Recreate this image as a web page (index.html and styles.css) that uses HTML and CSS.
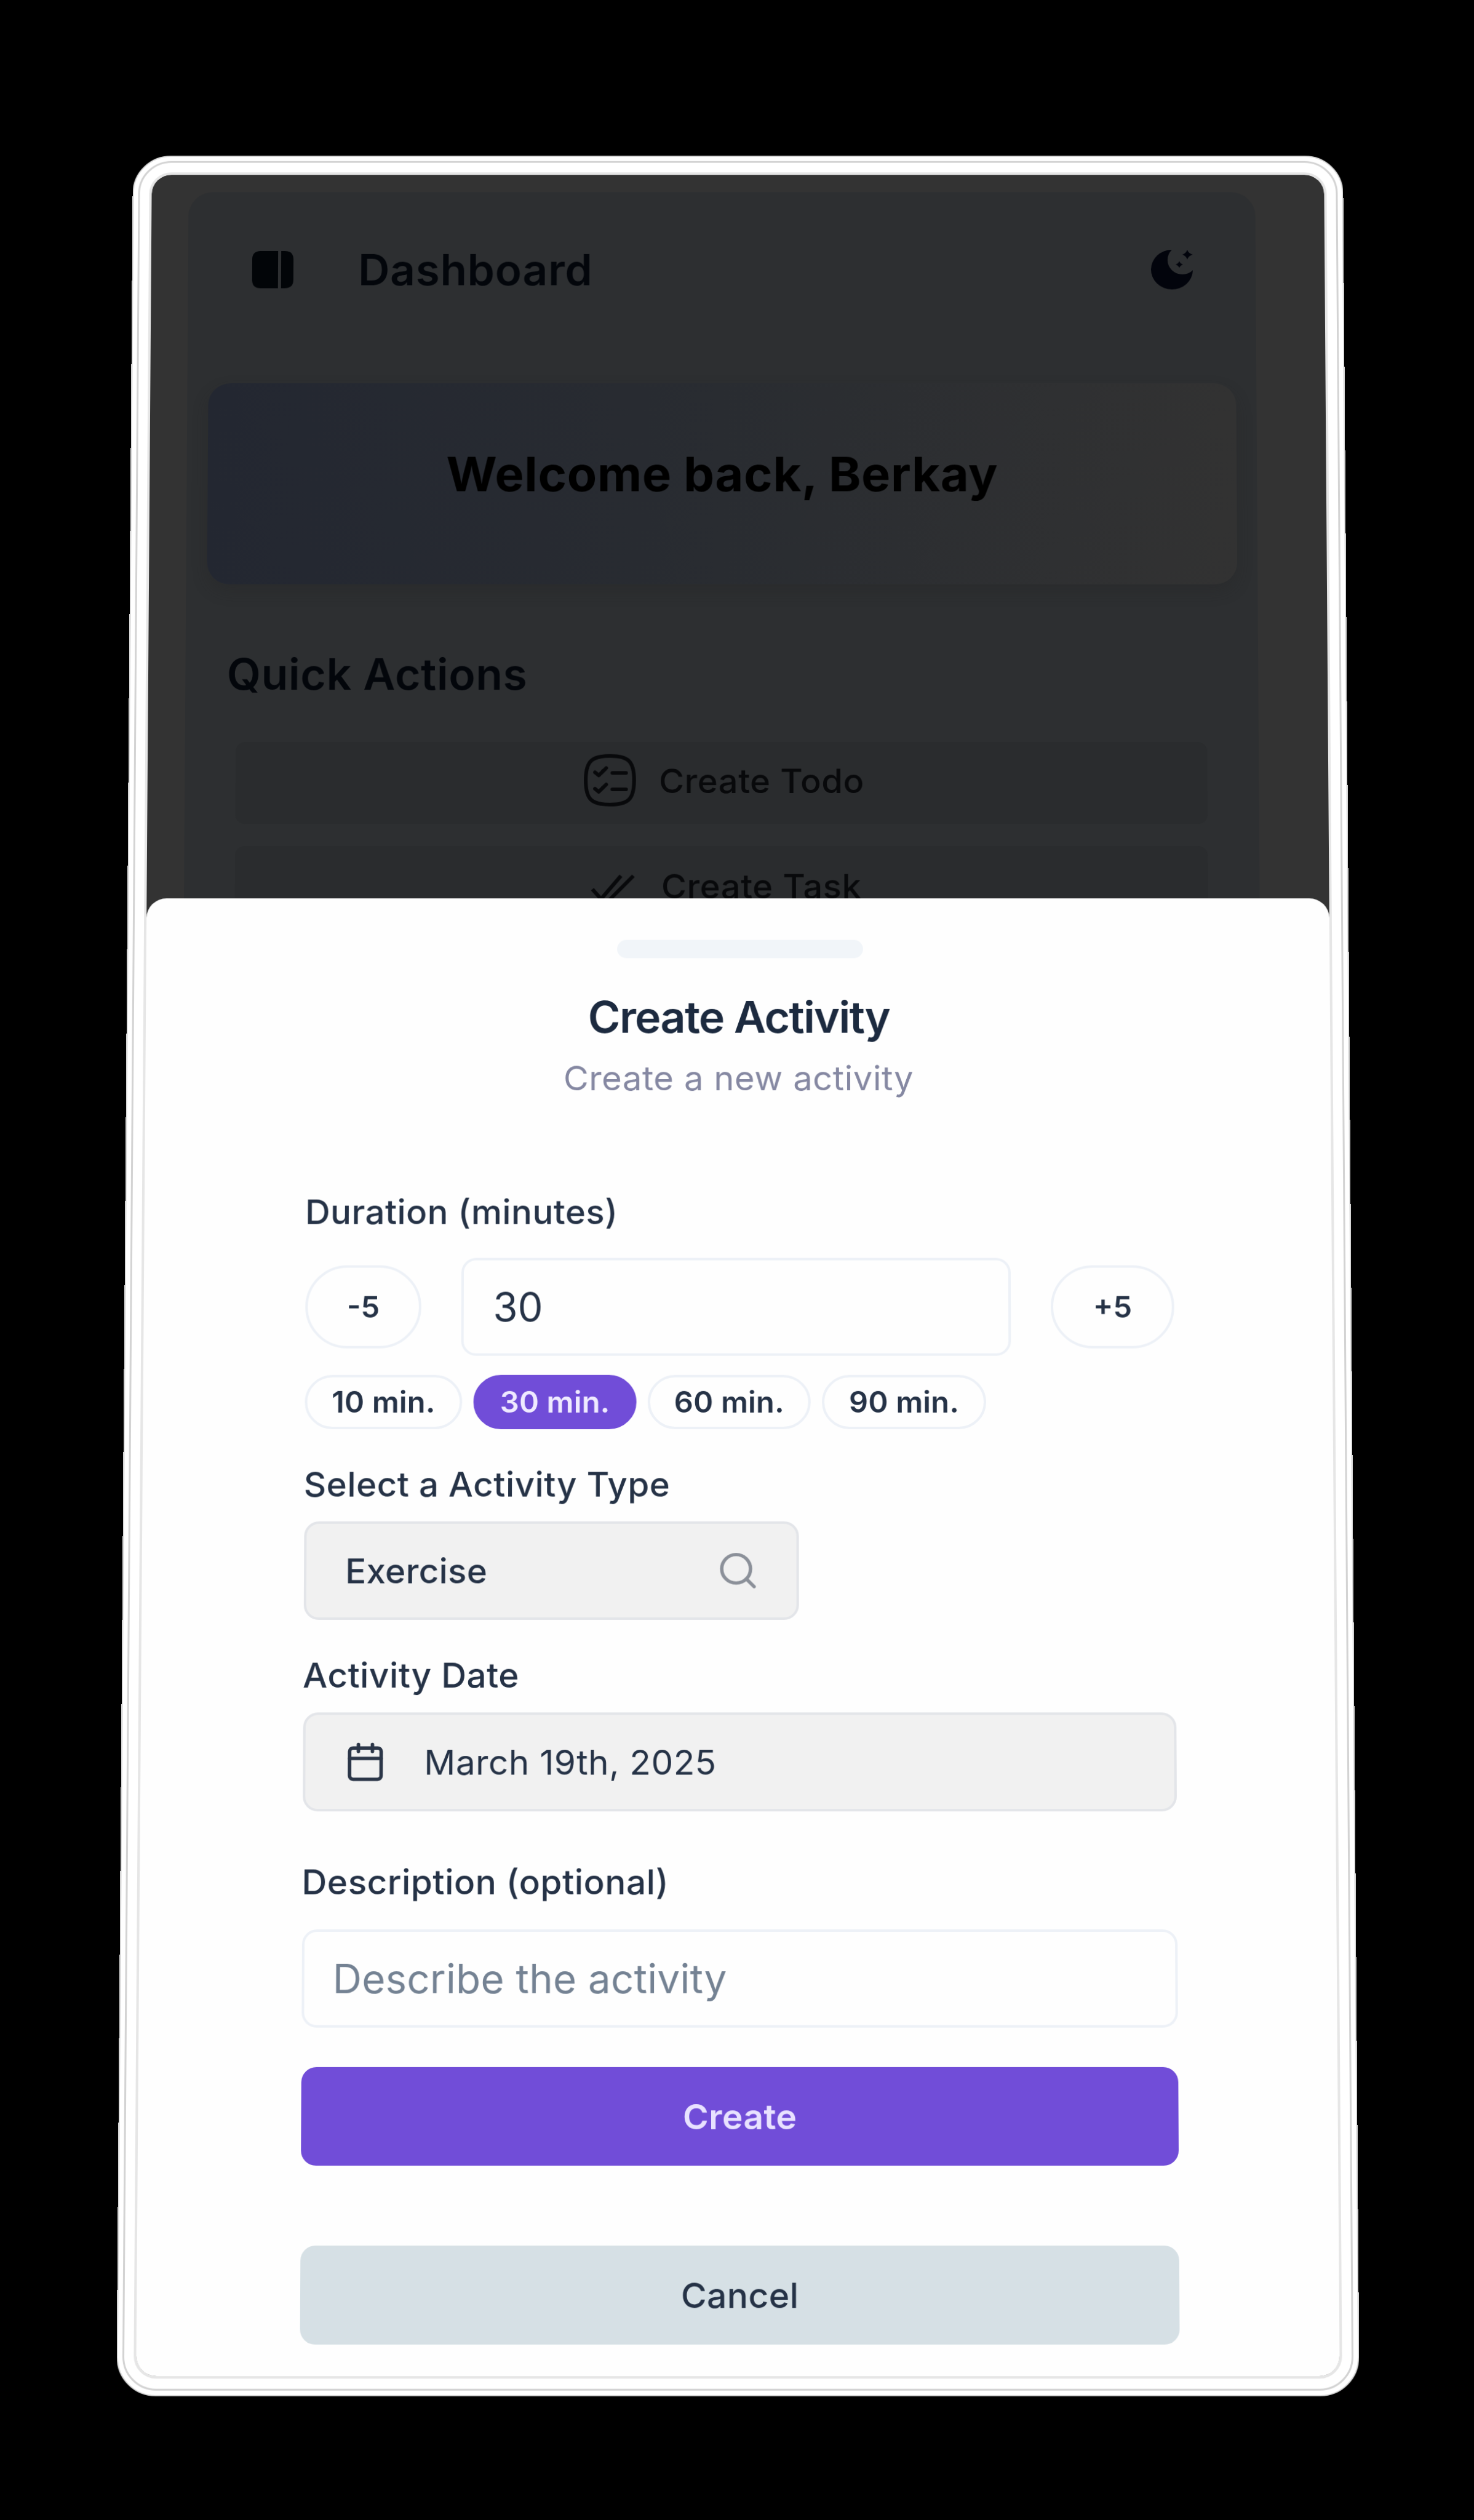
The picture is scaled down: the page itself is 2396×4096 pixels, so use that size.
FILE: index.html
```html
<!DOCTYPE html>
<html lang="en">
<head>
<meta charset="utf-8">
<title>Create Activity</title>
<link rel="stylesheet" href="styles.css">
</head>
<body>
<main class="device">
  <div class="bezel">
    <div class="screen">
      <section class="dashboard">
        <header class="topbar">
          <svg class="icon-panel" viewBox="0 0 67 62"><path d="M14 0H42V62H14Q0 62 0 48V14Q0 0 14 0ZM47 0H53Q67 0 67 14V48Q67 62 53 62H47Z"/></svg>
          <h1 class="topbar-title">Dashboard</h1>
          <svg class="icon-moon" viewBox="0 0 67 66"><path d="M33 0A34 33 0 1 0 67 34 22.500 22.500 0 1 1 33 0Z"/><path d="M58 0Q60 6 67 8 60 10 58 16 56 10 50 8 56 6 58 0ZM45 19Q46.500 23 51 24.500 46.500 26 45 30 43.500 26 39 24.500 43.500 23 45 19Z"/></svg>
        </header>
        <div class="banner">Welcome back, Berkay</div>
        <h2 class="quick-title">Quick Actions</h2>
        <div class="quick-list">
          <div class="quick-btn q-todo">
            <svg class="icon-todo" viewBox="0 0 84 86"><path d="M42 3C72 3 81 12 81 43S72 83 42 83 3 74 3 43 12 3 42 3ZM18 30L24 35 36 23M18 57L24 62 36 50M46 31H68M46 58H68"/></svg>
            <span class="todo-text">Create Todo</span>
          </div>
          <div class="quick-btn">
            <svg class="icon-task" viewBox="0 0 84 62"><path d="M14 36L28 52 60 14M34 57L41 54 80 14"/></svg>
            <span class="task-text">Create Task</span>
          </div>
        </div>
      </section>
      <section class="sheet">
        <div class="handle"></div>
        <h2 class="sheet-title">Create Activity</h2>
        <p class="sheet-sub">Create a new activity</p>
        <form class="form">
          <label class="label l-duration">Duration (minutes)</label>
          <div class="duration">
            <span class="pill minus">-5</span>
            <span class="input amount">30</span>
            <span class="pill plus">+5</span>
          </div>
          <div class="chips">
            <span class="chip c10">10 min.</span>
            <span class="chip active">30 min.</span>
            <span class="chip">60 min.</span>
            <span class="chip c90">90 min.</span>
          </div>
          <label class="label l-type">Select a Activity Type</label>
          <div class="select">
            <span class="t-exercise">Exercise</span>
            <svg class="icon-search" viewBox="0 0 24 24"><circle cx="11" cy="11" r="8"/><path d="m21 21-4.300-4.300"/></svg>
          </div>
          <label class="label l-date">Activity Date</label>
          <div class="date">
            <svg class="icon-cal" viewBox="0 0 24 24"><path d="M8 2v4M16 2v4M3 10h18"/><rect x="3" y="4" width="18" height="18" rx="2"/></svg>
            <span class="t-date">March 19th, 2025</span>
          </div>
          <label class="label l-desc">Description (optional)</label>
          <span class="input desc">Describe the activity</span>
          <span class="btn create">Create</span>
          <span class="btn cancel">Cancel</span>
        </form>
      </section>
    </div>
  </div>
</main>
</body>
</html>
```
FILE: styles.css
```css
* { box-sizing: border-box; margin: 0; padding: 0; }
html { background: #000; }
body {
  width: 2396px;
  height: 4096px;
  overflow: hidden;
  background: #000;
  padding: 253px 0 0 216px;
  font-family: Inter, "Liberation Sans", sans-serif;
  font-optical-sizing: none;
  color: #253246;
}
svg { display: block; flex: none; overflow: visible; }
span, h1, h2, .banner, .sheet-sub, .label { white-space: nowrap; }

/* The phone is tipped slightly backwards: its top edge is narrower. */
.device {
  width: 1967px;
  height: 3642px;
  padding: 7px;
  background: #fff;
  border: 2px solid #d6d6d6;
  border-radius: 62px;
  transform-origin: top center;
  transform: matrix3d(1, 0, 0, 0, 0, 0.97352, 0, -0.000007271, 0, 0, 1, 0, 0, 0, 0, 1);
}
.bezel {
  height: 100%;
  padding: 16px 15px;
  border: 3px solid #d3d3d3;
  border-radius: 54px;
}
.screen {
  height: 100%;
  border: 4px solid #e6e6e6;
  border-radius: 36px;
  overflow: hidden;
  background: #333;
  background-clip: padding-box;
}

.dashboard {
  height: 1197px;
  margin: 29px 112px -29px 60px;
  border-radius: 40px 40px 0 0;
  background: #2d2f31;
  overflow: hidden;
  color: #03060b;
}
.topbar {
  display: flex;
  align-items: center;
  height: 130px;
  margin: 64px 102px 0 104px;
}
.icon-panel { width: 67px; height: 62px; fill: #020508; }
.icon-moon { width: 67px; height: 66px; fill: #02040c; margin-left: auto; }
.topbar-title { font-size: 71px; font-weight: 600; letter-spacing: .7px; line-height: 90px; margin-left: 105px; }
.banner {
  height: 333px;
  margin: 124px 33px 0 34px;
  border-radius: 36px;
  display: flex;
  align-items: center;
  justify-content: center;
  padding-bottom: 33px;
  font-size: 79px;
  font-weight: 700;
  letter-spacing: .6px;
  color: #000;
  background: linear-gradient(90deg, #232731, #292c31 50%, #323232);
  box-shadow: 0 12px 24px rgba(35, 37, 38, .3);
}
.quick-title { font-size: 71px; font-weight: 600; letter-spacing: .6px; line-height: 90px; margin: 103px 0 0 67px; }
.quick-list { display: flex; flex-direction: column; gap: 36px; margin: 67px 83px 0 82px; }
.quick-btn {
  height: 135px;
  display: flex;
  align-items: center;
  padding: 0 0 4px 562px;
  border-radius: 16px;
  background: #2a2c2e;
  color: #08090b;
  font-size: 55.500px;
  font-weight: 500;
  letter-spacing: .6px;
  flex: none;
}
.q-todo { padding-bottom: 9px; }
.icon-todo, .icon-task { width: 84px; fill: none; stroke: #08090b; stroke-width: 6; stroke-linecap: round; stroke-linejoin: round; }
.icon-todo { height: 86px; }
.icon-task { height: 62px; stroke-linecap: butt; }
.todo-text { margin-left: 37px; }
.task-text { margin-left: 41px; }

.sheet {
  height: 2400px;
  position: relative;
  background: #fefefe;
  border-radius: 32px 32px 0 0;
  padding-top: 68px;
  display: flex;
  flex-direction: column;
  align-items: center;
}
.handle { width: 396px; height: 30px; border-radius: 15px; background: #f1f5f9; margin-left: 6px; }
.sheet-title { font-size: 71px; font-weight: 600; letter-spacing: -1.700px; line-height: 90px; margin: 51px 0 0 3px; color: #1c2a3f; }
.sheet-sub { font-size: 55.500px; letter-spacing: .550px; line-height: 70px; margin: 20px 0 0 2px; color: #8588a2; }
.form { width: 1393px; margin: 148px 0 0 6px; display: flex; flex-direction: column; }
.label { font-size: 55.500px; font-weight: 500; letter-spacing: .5px; line-height: 70px; margin-left: -1px; }
.duration { display: flex; align-items: center; margin-top: 40px; }
.pill {
  height: 135px;
  border: 4px solid #edf1f7;
  border-radius: 68px;
  display: flex;
  align-items: center;
  justify-content: center;
  font-size: 48px;
  font-weight: 600;
}
.minus { width: 186px; }
.plus { width: 198px; }
.input {
  border: 4px solid #edf1f7;
  border-radius: 24px;
  display: flex;
  align-items: center;
  padding-left: 47px;
  font-size: 64px;
}
.amount { width: 881px; height: 159px; margin: 0 64px; }
.chips { display: flex; gap: 18px; margin-top: 31px; }
.chip {
  width: 261px;
  height: 88px;
  border: 4px solid #edf1f7;
  border-radius: 44px;
  display: flex;
  align-items: center;
  justify-content: center;
  padding-bottom: 2px;
  font-size: 48px;
  font-weight: 600;
  letter-spacing: .2px;
}
.c10 { width: 252px; }
.c90 { width: 263px; }
.active { background: #714dd8; border-color: #714dd8; color: #efeaff; }
.l-type { margin-top: 54px; }
.select, .date {
  height: 159px;
  border: 4px solid #e3e5e9;
  border-radius: 24px;
  background: #f1f1f1;
  display: flex;
  align-items: center;
  font-size: 55.500px;
}
.select { width: 791px; margin-top: 25px; padding: 0 59px 0 62px; justify-content: space-between; font-weight: 500; letter-spacing: .3px; }
.icon-search { width: 69px; height: 69px; fill: none; stroke: #8b9099; stroke-width: 1.900; stroke-linecap: round; }
.l-date { margin-top: 54px; }
.date { margin-top: 25px; padding-left: 62px; gap: 60px; letter-spacing: .5px; }
.icon-cal { width: 67px; height: 67px; fill: none; stroke: #2b3648; stroke-width: 2; stroke-linecap: round; stroke-linejoin: round; }
.l-desc { margin-top: 78px; }
.desc { height: 157px; margin-top: 41px; padding-left: 45px; letter-spacing: .250px; color: #748293; }
.btn {
  height: 157px;
  border-radius: 24px;
  display: flex;
  align-items: center;
  justify-content: center;
  font-size: 55.500px;
  font-weight: 500;
  letter-spacing: .4px;
}
.create { margin-top: 63px; background: #714dd8; color: #e8e2ff; font-weight: 600; }
.cancel { margin-top: 127px; background: #d6e0e5; }
```
